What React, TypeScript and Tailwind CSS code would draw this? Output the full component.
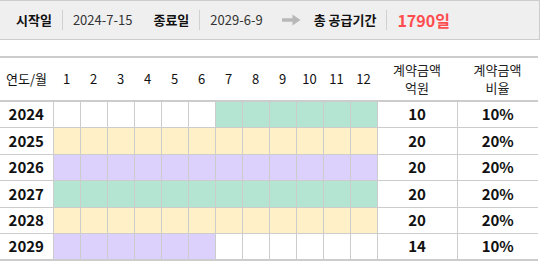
import React from 'react';

type Fill = 'g' | 'y' | 'p' | '';

const rows: { year: string; fills: Fill[]; amount: string; ratio: string }[] = [
  { year: '2024', fills: ['', '', '', '', '', '', 'g', 'g', 'g', 'g', 'g', 'g'], amount: '10', ratio: '10%' },
  { year: '2025', fills: Array(12).fill('y'), amount: '20', ratio: '20%' },
  { year: '2026', fills: Array(12).fill('p'), amount: '20', ratio: '20%' },
  { year: '2027', fills: Array(12).fill('g'), amount: '20', ratio: '20%' },
  { year: '2028', fills: Array(12).fill('y'), amount: '20', ratio: '20%' },
  { year: '2029', fills: ['p', 'p', 'p', 'p', 'p', 'p', '', '', '', '', '', ''], amount: '14', ratio: '10%' },
];

const fillClass: Record<Fill, string> = {
  g: 'bg-[#b4e5d3]',
  y: 'bg-[#fff0c8]',
  p: 'bg-[#dcd1fc]',
  '': 'bg-white',
};

const Sep = () => <span className="mx-[10px] h-[20px] w-px bg-[#d0d0d0]" />;

const App: React.FC = () => {
  return (
    <div className="w-[550px] h-[264px] bg-white text-[#111] font-['Noto_Sans_CJK_KR','Noto_Sans',sans-serif]">
      <div className="flex h-[40px] w-[540px] items-center border-y border-r border-[#cccccc] bg-[#efefef] pl-[16px] text-[13px]">
        <span className="font-bold">시작일</span>
        <Sep />
        <span className="text-[#333]">2024-7-15</span>
        <span className="ml-[21px] font-bold">종료일</span>
        <Sep />
        <span className="text-[#333]">2029-6-9</span>
        <svg className="ml-[19px] mr-[13px]" width="19" height="12" viewBox="0 0 19 12">
          <path d="M0 6 H12" stroke="#b8b8b8" strokeWidth="3.5" />
          <path d="M10.5 0.5 L18.5 6 L10.5 11.5 Z" fill="#b8b8b8" />
        </svg>
        <span className="font-bold">총 공급기간</span>
        <Sep />
        <span className="text-[16px] font-bold text-[#ff4d4f]">1790일</span>
      </div>

      <table className="mt-[16px] w-[538px] table-fixed border-collapse border-y-2 border-[#cccccc] text-[13px]">
        <colgroup>
          <col className="w-[53px]" />
          {Array.from({ length: 12 }).map((_, i) => (
            <col key={i} className="w-[27px]" />
          ))}
          <col className="w-[80px]" />
          <col className="w-[81px]" />
        </colgroup>
        <thead>
          <tr className="h-[44px] border-b-2 border-[#cccccc]">
            <th className="font-normal">연도/월</th>
            {Array.from({ length: 12 }).map((_, i) => (
              <th key={i} className="font-normal">{i + 1}</th>
            ))}
            <th className="font-normal leading-[18px] text-[#222]">
              <div>계약금액</div>
              <div>억원</div>
            </th>
            <th className="font-normal leading-[18px] text-[#222]">
              <div>계약금액</div>
              <div>비율</div>
            </th>
          </tr>
        </thead>
        <tbody className="text-[15px] font-bold">
          {rows.map((r) => (
            <tr key={r.year} className="h-[26.5px] border-b border-[#cccccc] last:border-b-0">
              <td className="border-r border-[#cccccc] text-center">{r.year}</td>
              {r.fills.map((f, i) => (
                <td key={i} className={`border-r border-[#cccccc] ${fillClass[f]}`} />
              ))}
              <td className="border-r border-[#cccccc] text-center">{r.amount}</td>
              <td className="text-center">{r.ratio}</td>
            </tr>
          ))}
        </tbody>
      </table>
    </div>
  );
};

export default App;
